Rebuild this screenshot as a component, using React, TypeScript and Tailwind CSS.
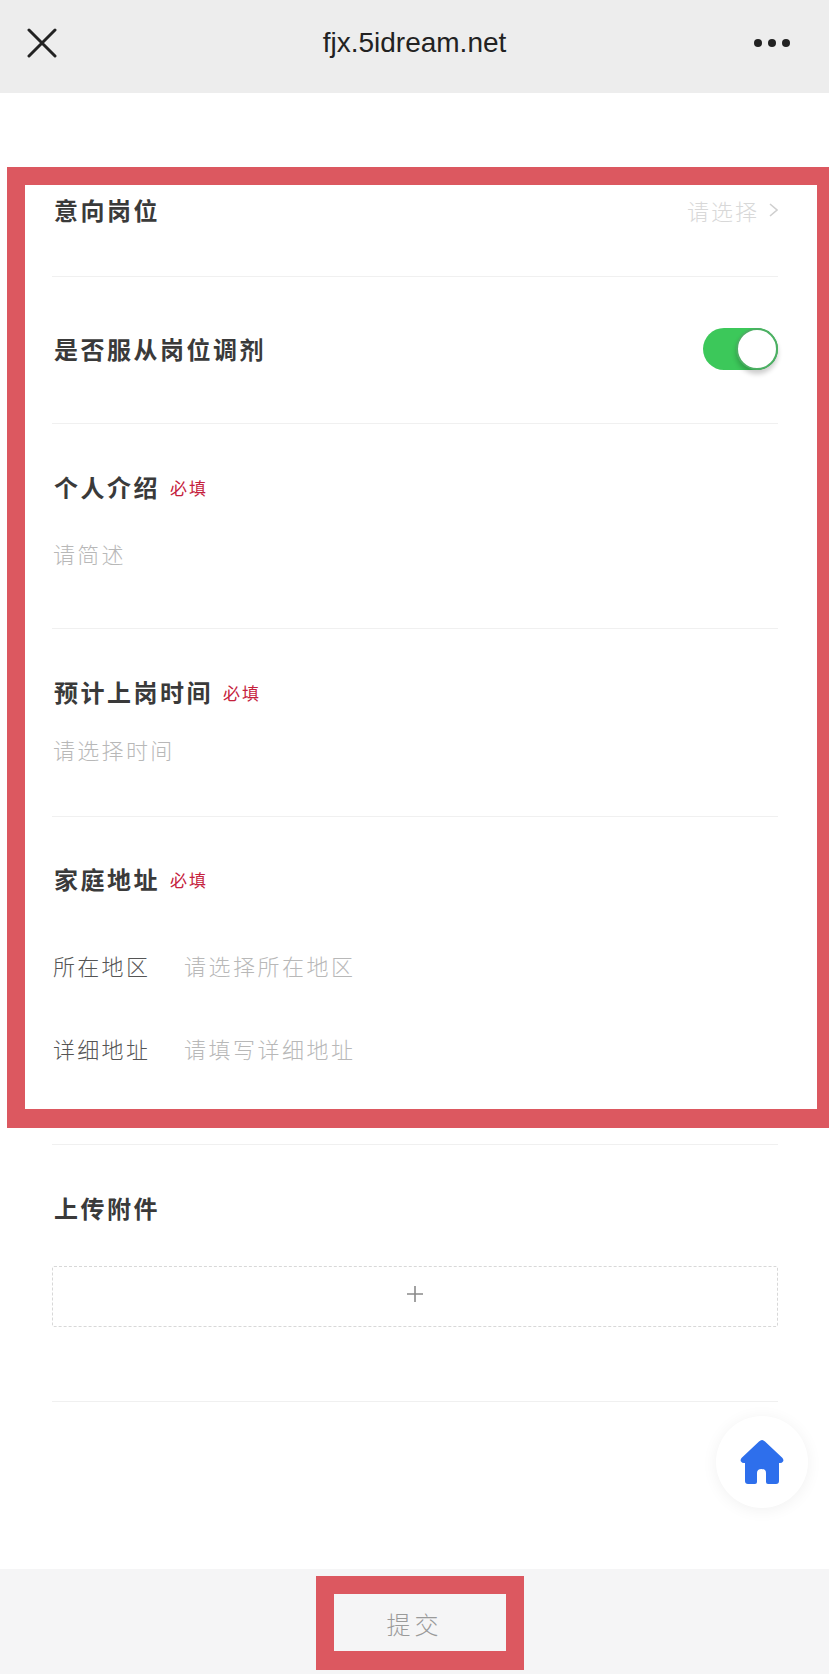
const cjk = "font-['Noto_Sans_CJK_SC','Noto_Sans',sans-serif]";

function Heading({ children, required }: { children: string; required?: boolean }) {
  return (
    <div className="flex items-center h-[34px] pl-[2px]">
      <span className="text-[24px] leading-[34px] tracking-[2.5px] font-bold text-[#3a3a3a]">{children}</span>
      {required && (
        <span className="ml-[10px] mt-[1px] text-[17px] leading-[24px] tracking-[2px] text-[#c5213c]">必填</span>
      )}
    </div>
  );
}

function Hint({ children, className = "" }: { children: string; className?: string }) {
  return <div className={`pl-[1px] text-[22px] leading-[32px] tracking-[2.3px] font-light text-[#b8b8b8] ${className}`}>{children}</div>;
}

function AddressRow({ label, hint, className }: { label: string; hint: string; className: string }) {
  return (
    <div className={`flex items-center h-[32px] pl-[1px] ${className}`}>
      <span className="w-[131px] text-[22px] leading-[32px] tracking-[2.3px] font-light text-[#555555]">{label}</span>
      <span className="text-[22px] leading-[32px] tracking-[2.5px] font-light text-[#b8b8b8]">{hint}</span>
    </div>
  );
}

export default function App() {
  return (
    <div className={`relative flex flex-col w-full h-[1674px] overflow-hidden bg-white ${cjk}`}>
      <header className="flex items-center justify-between h-[93px] pb-[7px] pl-[27px] pr-[39px] bg-[#ededed]">
        <div className="w-[54px]">
          <svg width="30" height="30" viewBox="0 0 30 30" fill="none" stroke="#222222" strokeWidth="3" strokeLinecap="round">
            <path d="M2 2 L28 28 M28 2 L2 28" />
          </svg>
        </div>
        <span className="font-['Liberation_Sans',sans-serif] text-[28px] leading-[32px] text-[#222222]">fjx.5idream.net</span>
        <div className="flex items-center justify-end gap-[6px] w-[42px]">
          <span className="w-[8px] h-[8px] rounded-full bg-[#222222]" />
          <span className="w-[8px] h-[8px] rounded-full bg-[#222222]" />
          <span className="w-[8px] h-[8px] rounded-full bg-[#222222]" />
        </div>
      </header>

      <main className="flex-1 px-[52px] pr-[51px]">
        <section className="flex items-start justify-between h-[184px] pt-[100px] border-b border-[#f0f0f0]">
          <Heading>意向岗位</Heading>
          <div className="flex items-center gap-[10px] h-[34px]">
            <span className="text-[22px] leading-[32px] tracking-[2px] font-light text-[#d8d8d8]">请选择</span>
            <svg width="9" height="14" viewBox="0 0 9 14" fill="none" stroke="#cfcfcf" strokeWidth="1.6">
              <path d="M1 1 L8 7 L1 13" />
            </svg>
          </div>
        </section>

        <section className="flex items-center justify-between h-[147px] pb-[3px] border-b border-[#f0f0f0]">
          <Heading>是否服从岗位调剂</Heading>
          <div className="flex justify-end w-[75px] h-[42px] rounded-full bg-[#3cc85a]">
            <span className="w-[42px] h-[42px] rounded-full bg-white border-[2px] border-[#4caf63] shadow-[0_4px_5px_rgba(0,0,0,0.2)]" />
          </div>
        </section>

        <section className="h-[205px] pt-[46px] border-b border-[#f0f0f0]">
          <Heading required>个人介绍</Heading>
          <Hint className="mt-[33px]">请简述</Hint>
        </section>

        <section className="h-[188px] pt-[46px] border-b border-[#f0f0f0]">
          <Heading required>预计上岗时间</Heading>
          <Hint className="mt-[24px]">请选择时间</Hint>
        </section>

        <section className="h-[328px] pt-[45px] border-b border-[#f0f0f0]">
          <Heading required>家庭地址</Heading>
          <AddressRow className="mt-[53px]" label="所在地区" hint="请选择所在地区" />
          <AddressRow className="mt-[51px]" label="详细地址" hint="请填写详细地址" />
        </section>

        <section className="h-[257px] pt-[46px] border-b border-[#f0f0f0]">
          <Heading>上传附件</Heading>
          <div className="flex items-center justify-center h-[61px] mt-[41px] pb-[5px] border border-dashed border-[#d8d8d8] rounded-[2px]">
            <svg width="20" height="20" viewBox="0 0 20 20" fill="none" stroke="#8a8a8a" strokeWidth="1.6">
              <path d="M10 2 V18 M2 10 H18" />
            </svg>
          </div>
        </section>
      </main>

      <footer className="flex items-center justify-center h-[105px] pt-[4px] bg-[#f5f5f6]">
        <span className="text-[24px] leading-[32px] tracking-[4px] font-light text-[#9a9a9a]">提交</span>
      </footer>

      <div className="absolute left-[716px] top-[1416px] flex items-center justify-center w-[92px] h-[92px] rounded-full bg-white shadow-[0_2px_16px_rgba(0,0,0,0.06)]">
        <svg width="44" height="45" viewBox="0 0 44 45" fill="#2e6fec">
          <path d="M22 0 Q23.5 0 25 1.5 L42.5 18 Q44 20 43 21.5 Q42 23 40 23 L39 23 L39 41 Q39 44 36 44 L28 44 Q26 44 26 42 L26 33 Q26 29 21.5 29 Q17 29 17 33 L17 42 Q17 44 15 44 L8 44 Q5 44 5 41 L5 23 L4 23 Q2 23 1 21.5 Q0 20 1.5 18 L19 1.5 Q20.5 0 22 0 Z" />
        </svg>
      </div>

      <div className="absolute left-[7px] top-[167px] w-[822px] h-[961px] border-[#dc5860] border-t-[18px] border-l-[18px] border-r-[12px] border-b-[19px]" />
      <div className="absolute left-[316px] top-[1576px] w-[208px] h-[94px] border-[#dc5860] border-t-[18px] border-x-[18px] border-b-[19px]" />
    </div>
  );
}
